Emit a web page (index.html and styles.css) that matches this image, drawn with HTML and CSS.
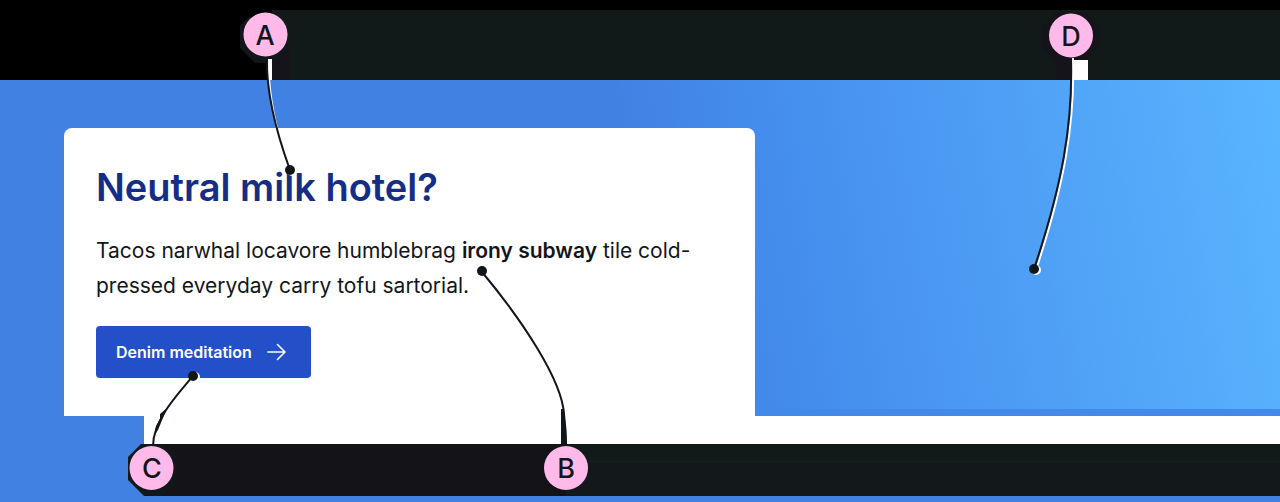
FILE: index.html
```html
<!DOCTYPE html>
<html lang="en">
<head>
<meta charset="utf-8">
<meta name="viewport" content="width=device-width, initial-scale=1">
<title>Neutral milk hotel?</title>
<link rel="stylesheet" href="styles.css">
</head>
<body>
<main class="page">
  <div class="topbar"><div class="topbar-panel"></div></div>
  <section class="hero">
    <article class="card">
      <h1 class="title">Neutral milk hotel?</h1>
      <p class="copy">Tacos narwhal locavore humblebrag <strong>irony subway</strong> tile cold-pressed everyday carry tofu sartorial.</p>
      <a class="cta" href="#">Denim meditation
        <svg class="arrow" viewBox="0 0 20 20" aria-hidden="true"><path d="M2 10H19M11.500 2.500L19 10L11.500 17.500"/></svg>
      </a>
    </article>
  </section>
  <div class="strip"></div>
  <footer class="footer"><div class="footer-bar"></div></footer>

  <svg class="callouts" width="1280" height="502" viewBox="0 0 1280 502">
    <path fill="#12151a" d="M250 16L240 26V48L255 63H272V34Z"/>
    <path fill="#15141a" d="M267 59H289V80H267ZM278 55L289 44V60H278Z"/>
    <path fill="#fff" d="M267 59H272V80H268Z"/>
    <path fill="#15141a" d="M1042 27L1056 12H1086L1100 27V47L1086 60H1072V80H1056V62L1042 48Z"/>
    <path fill="#fff" d="M1072 60H1088V80H1072Z"/>
    <path fill="#12171a" d="M141 444L128 457V480L144 496H162L176 481V457L163 444Z"/>
    <path fill="#12171a" d="M561 409H564Q566 426 567 444H561Z"/>

    <g class="halo">
      <path d="M269 78C271 105 274 115 277 128"/>
      <path d="M1073 58C1075 125 1064 185 1036 270"/>
      <circle cx="292" cy="171" r="5"/>
      <circle cx="1036" cy="270" r="5"/>
      <circle cx="195" cy="377" r="5"/>
    </g>
    <g class="leader">
      <path d="M267 58C266 96 278 137 290 170"/>
      <path d="M1071 58C1073 125 1062 185 1034 269"/>
      <path d="M482 272C522 320 562 380 564 414Q566 430 566 446"/>
      <path d="M193 376C174 398 153 422 153 446"/>
    </g>
    <path fill="#12161b" d="M167 408L160 414V419L156 426L154 436L158 430Z"/>
    <g class="dots">
      <circle cx="290" cy="170" r="5"/>
      <circle cx="1034" cy="269" r="5"/>
      <circle cx="482" cy="271" r="5"/>
      <circle cx="193" cy="376" r="5"/>
    </g>
    <g class="pins">
      <circle cx="265.500" cy="34.500" r="22"/>
      <circle cx="1071" cy="35.500" r="22"/>
      <circle cx="566" cy="468" r="22"/>
      <circle cx="151.500" cy="468" r="22"/>
    </g>
    <g class="letters">
      <text x="265" y="45">A</text>
      <text x="1071" y="46">D</text>
      <text x="566" y="478">B</text>
      <text x="152" y="478">C</text>
    </g>
  </svg>
</main>
</body>
</html>
```
FILE: styles.css
```css
* { box-sizing: border-box; }

body {
  margin: 0;
  background: #4181e2;
  color: #12161b;
  font-family: Inter, "Liberation Sans", sans-serif;
}

.page {
  position: relative;
  overflow: hidden;
}

.topbar {
  padding: 10px 0 0 272px;
  background: #000;
}

.topbar-panel {
  height: 70px;
  background: #121a19;
}

.hero {
  padding: 48px 64px 0;
  background:
    linear-gradient(90deg, #4181e2 50%, #438ae8 50%) bottom / 100% 7px no-repeat,
    linear-gradient(80deg, #4181e2 50%, #448cec 60%, #5ab5ff 100%);
}

.card {
  width: 60%;
  padding: 33px 32px 38px;
  border-radius: 8px 8px 0 0;
  background: #fff;
}

.title {
  margin: 0 0 20px;
  color: #142e87;
  font-size: 38px;
  font-weight: 600;
  line-height: 52px;
}

.copy {
  margin: 0 0 23px;
  font-size: 21px;
  line-height: 35px;
}

.copy strong { font-weight: 600; }

.cta {
  display: inline-flex;
  align-items: center;
  gap: 14px;
  height: 52px;
  padding: 0 25px 0 20px;
  border-radius: 4px;
  background: #234fc9;
  color: #fff;
  font-size: 16px;
  font-weight: 600;
  text-decoration: none;
  vertical-align: top;
}

.arrow {
  width: 20px;
  height: 20px;
  fill: none;
  stroke: #fff;
  stroke-width: 1.6;
  stroke-linecap: round;
  stroke-linejoin: round;
}

.strip {
  height: 28px;
  margin-left: 144px;
  background: #fff;
}

.footer { padding: 0 0 6px 144px; }

.footer-bar {
  height: 52px;
  background:
    linear-gradient(90deg, #141418 422px, transparent 422px),
    linear-gradient(#121a19 17px, #122221 17px 18px, #13181b 18px);
}

.callouts {
  position: absolute;
  top: 0;
  left: 0;
}

.halo { fill: #fff; }
.halo path { fill: none; stroke: #fff; stroke-width: 2; }
.leader { fill: none; stroke: #12161b; stroke-width: 2; }
.dots { fill: #12161b; }
.pins { fill: #ffbaea; }

.letters {
  fill: #12161b;
  font-size: 27px;
  font-weight: 500;
  text-anchor: middle;
}
```
